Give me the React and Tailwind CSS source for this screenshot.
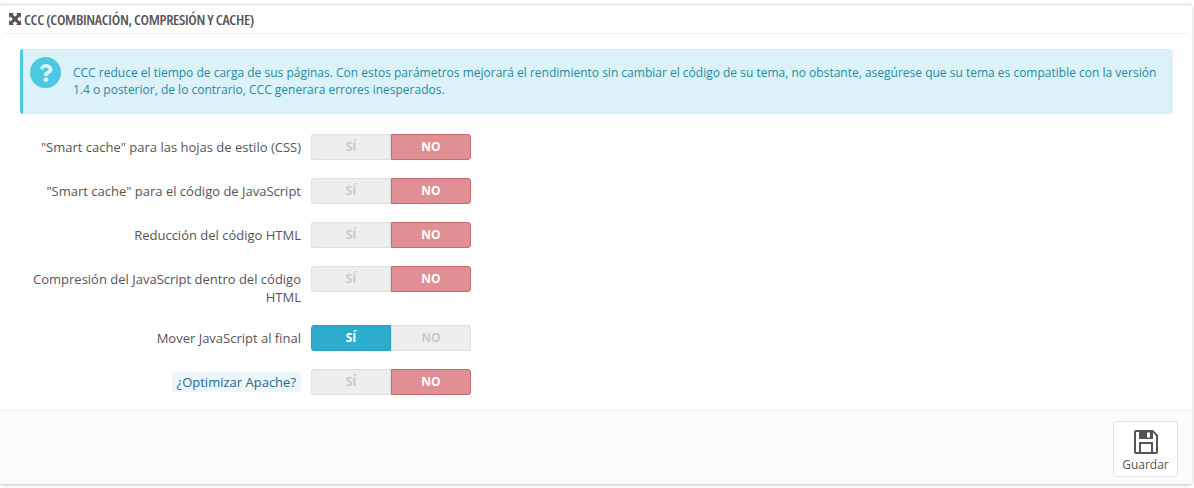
import React from "react";
import { FaQuestion } from "react-icons/fa";

const Toggle = ({ on }) => (
  <div className="flex w-[160px] h-[26px] text-[12px] font-bold">
    <div
      className={
        on
          ? "flex w-[80px] items-center justify-center rounded-l-[3px] border border-[#2b9cbf] bg-[#2eacce] text-white"
          : "flex w-[80px] items-center justify-center rounded-l-[3px] bg-[#eeeeee] font-semibold text-[#c3c3c3] shadow-[inset_0_0_2px_rgba(0,0,0,0.2)]"
      }
    >
      SÍ
    </div>
    <div
      className={
        on
          ? "flex w-[80px] items-center justify-center rounded-r-[3px] bg-[#eeeeee] font-semibold text-[#c3c3c3] shadow-[inset_0_0_2px_rgba(0,0,0,0.2)]"
          : "flex w-[80px] items-center justify-center rounded-r-[3px] border border-[#c9686f] bg-[#e08f95] text-white"
      }
    >
      NO
    </div>
  </div>
);

const Row = ({ label, on, help, className }) => (
  <div className={`flex items-start ${className}`}>
    <div className="w-[301px] pl-[30px] pt-[4px] text-right text-[13px] leading-[18px] text-[#555555]">
      {help ? (
        <span className="rounded-[3px] bg-[#edf6fb] px-[5px] py-[1px] text-[#25688a]">{label}</span>
      ) : (
        label
      )}
    </div>
    <div className="ml-[10px]">
      <Toggle on={on} />
    </div>
  </div>
);

export default function App() {
  return (
    <div className="h-[488px] w-[1194px] bg-white font-['Open_Sans',sans-serif]">
      <div className="pt-[4px] pr-[2px]">
        <div className="h-[480px] rounded-[3px] border-t border-[#e4e4e4] bg-white shadow-[0_1px_3px_rgba(0,0,0,0.25)]">
          <div className="mx-[4px] flex h-[29px] items-center border-b border-[#eeeeee] pl-[5px] text-[#555555]">
            <svg width="12" height="12" viewBox="0 0 12 12" fill="#555555" className="mr-[2px]">
              <path d="M0 0h5L3.600 1.400 6 3.800 8.400 1.400 7 0h5v5l-1.400-1.400L8.200 6l2.400 2.400L12 7v5H7l1.400-1.400L6 8.200l-2.400 2.400L5 12H0V7l1.400 1.400L3.800 6 1.400 3.600 0 5z" />
            </svg>
            <span className="ml-[1px] text-[15px] font-semibold [font-stretch:75%] tracking-[-0.35px]">
              CCC (COMBINACIÓN, COMPRESIÓN Y CACHE)
            </span>
          </div>
          <div className="ml-[20px] mr-[19px] mt-[15px] flex h-[65px] rounded-[3px] border-l-[3px] border-[#4bc8e2] bg-[#dcf2f8]">
            <div className="ml-[7px] mt-[8px] flex h-[31px] w-[31px] shrink-0 items-center justify-center rounded-full bg-[#4bc8e2]">
              <FaQuestion className="h-[18px] w-[18px] text-[#dcf2f8]" />
            </div>
            <p className="ml-[12px] mr-[12px] mt-[15px] text-[12px] leading-[17px] text-[#1f8ba0]">
              CCC reduce el tiempo de carga de sus páginas. Con estos parámetros mejorará el rendimiento sin cambiar el código de su tema, no obstante, asegúrese que su tema es compatible con la versión 1.4 o posterior, de lo contrario, CCC generara errores inesperados.
            </p>
          </div>
          <div className="mt-[20px]">
            <Row label={'"Smart cache" para las hojas de estilo (CSS)'} />
            <Row className="mt-[18px]" label={'"Smart cache" para el código de JavaScript'} />
            <Row className="mt-[18px]" label="Reducción del código HTML" />
            <Row className="mt-[18px]" label="Compresión del JavaScript dentro del código HTML" />
            <Row className="mt-[19px]" label="Mover JavaScript al final" on />
            <Row className="mt-[18px]" label="¿Optimizar Apache?" help />
          </div>
          <div className="mt-[15px] flex h-[74px] justify-end rounded-b-[3px] border-t border-[#eeeeee] bg-[#fbfcfe] pr-[14px] pt-[10px]">
            <button className="flex h-[56px] w-[65px] flex-col items-center rounded-[3px] border border-[#e4e4e4] bg-white pt-[8px] text-[12px] text-[#555555]">
              <svg width="24" height="24" viewBox="0 0 24 24" fill="#555555">
                <path fillRule="evenodd" d="M2 0h17l5 5v17a2 2 0 0 1-2 2H2a2 2 0 0 1-2-2V2a2 2 0 0 1 2-2zm0 2v20h3V12h14v10h3V6l-3-3.500V9H5V2zM7 14v8h10v-8zM13 2.500h3V7.500h-3z" />
              </svg>
              <span className="mt-[2px]">Guardar</span>
            </button>
          </div>
        </div>
      </div>
    </div>
  );
}
